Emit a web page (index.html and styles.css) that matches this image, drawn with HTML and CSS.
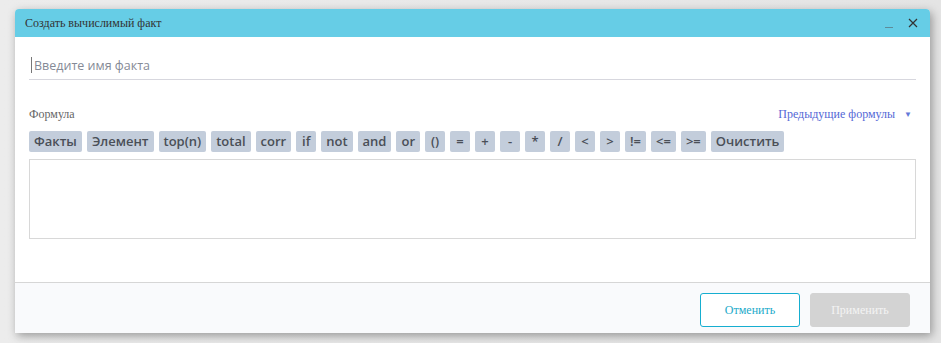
FILE: index.html
```html
<!DOCTYPE html>
<html lang="ru">
<head>
    <meta charset="UTF-8">
    <title>Создать вычислимый факт</title>
    <link rel="stylesheet" href="styles.css">
</head>
<body>
    <div class="dialog">
        <div class="dialog-header">
            <span class="dialog-title">Создать вычислимый факт</span>
            <div class="header-tools">
                <span class="tool-min"></span>
                <svg class="tool-close" width="10" height="10" viewBox="0 0 10 10">
                    <path d="M1 1 L9 9 M9 1 L1 9" stroke="#333" stroke-width="1.2" fill="none"/>
                </svg>
            </div>
        </div>

        <div class="dialog-body">
            <div class="name-field">
                <span class="caret"></span>
                <span class="placeholder">Введите имя факта</span>
            </div>

            <div class="formula-head">
                <span class="formula-label">Формула</span>
                <span class="prev-formulas">Предыдущие формулы <span class="arrow">&#9660;</span></span>
            </div>

            <div class="ops">
                <span class="op">Факты</span>
                <span class="op">Элемент</span>
                <span class="op">top(n)</span>
                <span class="op">total</span>
                <span class="op">corr</span>
                <span class="op">if</span>
                <span class="op">not</span>
                <span class="op">and</span>
                <span class="op">or</span>
                <span class="op">()</span>
                <span class="op">=</span>
                <span class="op">+</span>
                <span class="op">-</span>
                <span class="op">*</span>
                <span class="op">/</span>
                <span class="op">&lt;</span>
                <span class="op">&gt;</span>
                <span class="op">!=</span>
                <span class="op">&lt;=</span>
                <span class="op">&gt;=</span>
                <span class="op">Очистить</span>
            </div>

            <div class="formula-box"></div>
        </div>

        <div class="dialog-footer">
            <button class="btn btn-cancel">Отменить</button>
            <button class="btn btn-apply">Применить</button>
        </div>
    </div>
</body>
</html>
```

FILE: styles.css
```css
html, body {
    margin: 0;
    height: 100%;
}
body {
    background: linear-gradient(90deg, #ececec 0%, #e4e4e4 100%);
    padding: 9px 0 0 15px;
    box-sizing: border-box;
    font-family: "Liberation Serif", serif;
}
.dialog {
    width: 915px;
    height: 324px;
    background: white;
    border-radius: 4px 4px 0 0;
    box-shadow: 2px 3px 10px rgba(0,0,0,0.35);
    display: flex;
    flex-direction: column;
    overflow: hidden;
}
.dialog-header {
    height: 28px;
    background: #66cde6;
    display: flex;
    align-items: center;
    justify-content: space-between;
    padding: 0 12px 0 10px;
    flex-shrink: 0;
}
.dialog-title {
    font-size: 12px;
    color: #333;
}
.header-tools {
    display: flex;
    align-items: center;
    gap: 15px;
}
.tool-min {
    width: 8px;
    height: 1px;
    background: #5d8c9a;
    margin-top: 9px;
}
.tool-close {
    display: block;
}
.dialog-body {
    flex: 1;
    padding: 19px 14px 0 14px;
}
.name-field {
    height: 23px;
    border-bottom: 1px solid #d7d7de;
    display: flex;
    align-items: flex-start;
    padding-left: 2px;
}
.caret {
    width: 1px;
    height: 16px;
    background: #777;
    margin-top: 1px;
}
.placeholder {
    font-family: "Open Sans", sans-serif;
    font-size: 12.5px;
    color: #858a96;
    line-height: 20px;
    margin-left: 2px;
}
.formula-head {
    margin-top: 26px;
    display: flex;
    justify-content: space-between;
    align-items: center;
    height: 16px;
    font-size: 12px;
}
.formula-label {
    color: #666;
}
.prev-formulas {
    color: #5468d6;
}
.arrow {
    font-size: 8px;
    color: #6478d8;
    margin-left: 6px;
    margin-right: 4px;
    vertical-align: 1px;
}
.ops {
    display: flex;
    gap: 5px;
    margin-top: 9px;
}
.op {
    height: 21px;
    line-height: 21px;
    padding: 0 5px;
    background: #c3cddb;
    border-radius: 2px;
    font-family: "Open Sans", sans-serif;
    font-size: 13px;
    font-weight: 600;
    color: #4a4f57;
    min-width: 10px;
    text-align: center;
}
.formula-box {
    margin-top: 7px;
    height: 78px;
    border: 1px solid #d8d8d8;
}
.dialog-footer {
    height: 51px;
    border-top: 1px solid #d6d6d6;
    background: #f9fafc;
    display: flex;
    justify-content: flex-end;
    align-items: flex-start;
    gap: 10px;
    padding: 10px 20px 0 0;
    box-sizing: border-box;
    flex-shrink: 0;
}
.btn {
    width: 100px;
    height: 34px;
    border-radius: 3px;
    font-family: "Liberation Serif", serif;
    font-size: 12px;
    cursor: pointer;
}
.btn-cancel {
    background: white;
    border: 1px solid #16aed0;
    color: #1aa9c9;
}
.btn-apply {
    background: #d3d3d3;
    border: 1px solid #d3d3d3;
    color: #f4f4f4;
}
```
